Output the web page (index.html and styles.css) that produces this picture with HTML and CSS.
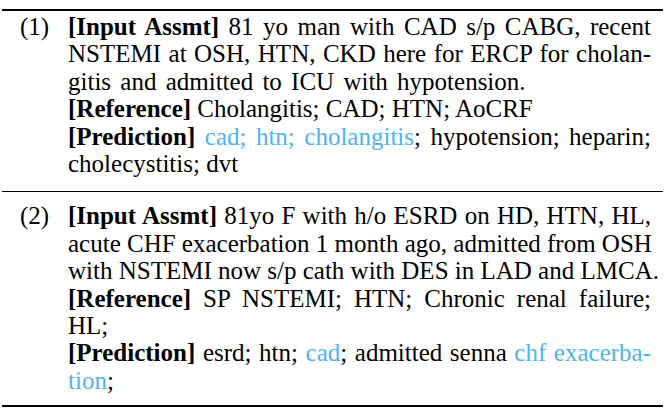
FILE: index.html
```html
<!DOCTYPE html>
<html>
<head>
<meta charset="utf-8">
<link rel="stylesheet" href="styles.css">
</head>
<body>
<div class="table">
  <div class="row first">
    <div class="num">(1)</div>
    <div class="text">
      <span class="line just"><b>[Input Assmt]</b> 81 yo man with CAD s/p CABG, recent</span>
      <span class="line just">NSTEMI at OSH, HTN, CKD here for ERCP for cholan-</span>
      <span class="line loose">gitis and admitted to ICU with hypotension.</span>
      <span class="line"><b>[Reference]</b> Cholangitis; CAD; HTN; AoCRF</span>
      <span class="line just"><b>[Prediction]</b> <span class="hit">cad; htn; cholangitis</span>; hypotension; heparin;</span>
      <span class="line">cholecystitis; dvt</span>
    </div>
  </div>
  <div class="row second">
    <div class="num">(2)</div>
    <div class="text">
      <span class="line just"><b>[Input Assmt]</b> 81yo F with h/o ESRD on HD, HTN, HL,</span>
      <span class="line just">acute CHF exacerbation 1 month ago, admitted from OSH</span>
      <span class="line">with NSTEMI now s/p cath with DES in LAD and LMCA.</span>
      <span class="line just"><b>[Reference]</b> SP NSTEMI; HTN; Chronic renal failure;</span>
      <span class="line">HL;</span>
      <span class="line just"><b>[Prediction]</b> esrd; htn; <span class="hit">cad</span>; admitted senna <span class="hit">chf exacerba-</span></span>
      <span class="line"><span class="hit">tion</span>;</span>
    </div>
  </div>
</div>
</body>
</html>
```

FILE: styles.css
```css
html, body {
  margin: 0;
  padding: 0;
  background: #ffffff;
}

body {
  font-family: "Liberation Serif", "Times New Roman", serif;
  font-size: 25px;
  color: #000000;
}

.table {
  margin: 9px 0 0 2px;
  width: 661px;
  border-top: 2px solid #000;
  border-bottom: 2px solid #000;
}

.row {
  display: grid;
  grid-template-columns: 48px 583px;
  padding-left: 18px;
  line-height: 27.4px;
}

.row.first {
  padding-top: 2px;
  padding-bottom: 14px;
  border-bottom: 1px solid #000;
}

.row.second {
  padding-top: 10px;
  padding-bottom: 11px;
}

.num {
  white-space: nowrap;
}

.line {
  display: block;
  white-space: nowrap;
  text-align: left;
}

.line.just {
  text-align: justify;
  text-align-last: justify;
}

.line.loose {
  word-spacing: 3px;
}

b {
  font-weight: bold;
}

.hit {
  color: #4fb4ea;
}
```
